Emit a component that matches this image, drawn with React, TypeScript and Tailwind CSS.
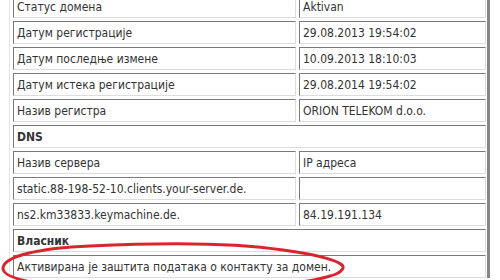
import React from 'react';

type Row =
  | { kind: 'pair'; label: string; value: string }
  | { kind: 'head'; label: string }
  | { kind: 'full'; label: string };

const rows: Row[] = [
  { kind: 'pair', label: 'Статус домена', value: 'Aktivan' },
  { kind: 'pair', label: 'Датум регистрације', value: '29.08.2013 19:54:02' },
  { kind: 'pair', label: 'Датум последње измене', value: '10.09.2013 18:10:03' },
  { kind: 'pair', label: 'Датум истека регистрације', value: '29.08.2014 19:54:02' },
  { kind: 'pair', label: 'Назив регистра', value: 'ORION TELEKOM d.o.o.' },
  { kind: 'head', label: 'DNS' },
  { kind: 'pair', label: 'Назив сервера', value: 'IP адреса' },
  { kind: 'pair', label: 'static.88-198-52-10.clients.your-server.de.', value: '' },
  { kind: 'pair', label: 'ns2.km33833.keymachine.de.', value: '84.19.191.134' },
  { kind: 'head', label: 'Власник' },
  { kind: 'full', label: 'Активирана је заштита података о контакту за домен.' },
];

// inset cell border, like an old border="1" table
const cell =
  'h-[23px] flex items-center pl-[3px] pt-[1px] whitespace-nowrap bg-white border border-t-[#7a7a7a] border-l-[#7a7a7a] border-b-[#dcdcdc] border-r-[#dcdcdc]';

export default function App() {
  return (
    <div
      className="relative w-[500px] h-[280px] overflow-hidden bg-white text-[#333] text-[12px]"
      style={{ fontFamily: '"DejaVu Sans Condensed", "DejaVu Sans", sans-serif' }}
    >
      <div className="ml-[9px] mt-[-5px] w-[481px] pl-[3px] border-l border-l-[#e4e4e4] border-r-[3px] border-r-[#858585]">
        <div className="grid grid-cols-[283px_187px] gap-[3px]">
          {rows.map((r, i) =>
            r.kind === 'pair' ? (
              <React.Fragment key={i}>
                <div className={cell}>{r.label}</div>
                <div className={cell}>{r.value}</div>
              </React.Fragment>
            ) : (
              <div key={i} className={`${cell} col-span-2 ${r.kind === 'head' ? 'font-bold' : ''}`}>
                {r.label}
              </div>
            )
          )}
        </div>
      </div>

      {/* hand-drawn red marker around the privacy note */}
      <svg className="absolute inset-0 pointer-events-none" width="500" height="280" viewBox="0 0 500 280">
        <path
          d="M 330 276 C 300 286, 200 292, 120 290 C 50 288, 2 280, 3 268 C 4 256, 40 248, 90 246 C 150 243, 230 242, 283 250 C 320 255, 345 262, 343 268 C 341 273, 335 275, 322 278"
          fill="none"
          stroke="#d9262c"
          strokeWidth="3"
          strokeLinecap="round"
        />
      </svg>
    </div>
  );
}
